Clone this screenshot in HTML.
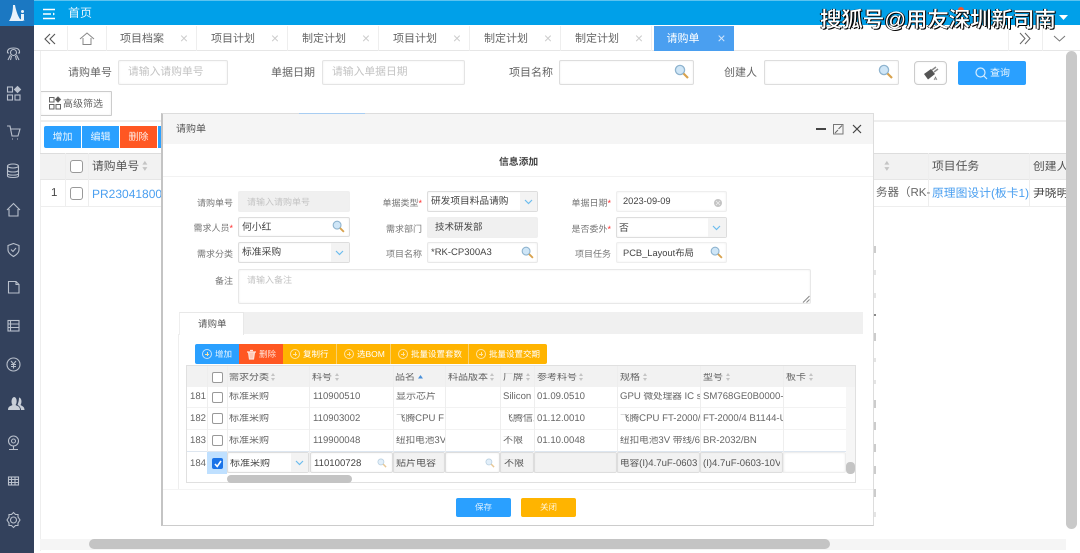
<!DOCTYPE html>
<html><head><meta charset="utf-8"><style>
*{box-sizing:border-box}
html,body{margin:0;padding:0;width:1080px;height:553px;overflow:hidden;background:#fff}
body{font-family:"Liberation Sans","Noto Sans CJK SC",sans-serif;color:#555;position:relative;text-rendering:geometricPrecision}
#w{position:absolute;left:0;top:0;width:1080px;height:553px;filter:blur(.3px)}
.a{position:absolute;white-space:nowrap;overflow:hidden}
.t{position:absolute;white-space:nowrap;line-height:1}
svg{position:absolute;overflow:visible}
.ipt{position:absolute;border:1px solid #e4e4e4;border-radius:2px;background:#fff;box-shadow:inset 0 0 2px #eee}
.tab{position:absolute;top:26px;height:25px;border-right:1px solid #eee;font-size:11px;color:#666;line-height:27px;padding-left:14px;width:91px}
.tab i{position:absolute;right:8px;top:0;font-style:normal;color:#ccc;font-size:14px;line-height:25px}
.btn{position:absolute;top:344px;height:20px;background:#ffb400;border-right:1px solid #f8d070;color:#fff;font-size:8.5px;line-height:20px}
.btn b{position:absolute;left:7px;top:5px;width:10px;height:10px;border:1px solid #ffe2a0;border-radius:50%}
.btn b:before{content:"";position:absolute;left:2px;top:3.5px;width:4px;height:1px;background:#ffe2a0}
.btn b:after{content:"";position:absolute;left:3.5px;top:2px;width:1px;height:4px;background:#ffe2a0}
.btn span{position:absolute;left:20px;top:0}
.c{position:absolute;font-size:10px;color:#666;line-height:1;white-space:nowrap;overflow:hidden;margin-top:1px}
.n{font-size:9.6px}
.cb{position:absolute;width:11px;height:11px;border:1px solid #999;border-radius:2px;background:#fff}
.l{position:absolute;background:#eee}
.s{position:absolute;width:5px;height:9px}
.s:before{content:"";position:absolute;left:0;top:0;border:2.5px solid transparent;border-bottom:3px solid #c4c4c4;border-top:0}
.s:after{content:"";position:absolute;left:0;top:5px;border:2.5px solid transparent;border-top:3px solid #c4c4c4;border-bottom:0}
.lab{position:absolute;font-size:9px;color:#777;line-height:1;white-space:nowrap;text-align:right;width:60px;margin-top:2px}
.lab em{color:#f33;font-style:normal}
.v{position:absolute;font-size:9.8px;color:#444;line-height:1;white-space:nowrap;margin-top:1px}
.ph{position:absolute;font-size:9.5px;color:#c4c4c4;line-height:1;white-space:nowrap}
.m{position:absolute;left:874px;width:2px;background:#ccc}
</style></head><body>
<svg width="0" height="0" style="position:absolute"><defs>
<g id="mag"><circle cx="6" cy="6" r="4.6" fill="#cfe6f7" stroke="#8fb4cf" stroke-width="1.3"/><path d="M9.5 9.5L14 14" stroke="#d8a24e" stroke-width="2.2"/></g>
<g id="chev"><path d="M0 0L3.5 3.5L7 0" fill="none" stroke="#6cbcee" stroke-width="1.2"/></g>
</defs></svg>
<div id="w">
<!-- top -->
<div class="a" style="left:0;top:0;width:1080px;height:25px;background:#00a0e9;border-top:1px solid #5cc3f0"></div>
<div class="a" style="left:0;top:0;width:34px;height:26px;background:#1b78c2"></div>
<svg style="left:0;top:0" width="34" height="26"><path d="M9 21C12 17 13 10 13 5L15 5C16 11 18 16 20 19L25 21Z" fill="#e8f2fa"/><rect x="21" y="14" width="3" height="6" fill="#e8f2fa"/><circle cx="22.500" cy="11.500" r="1.500" fill="#e8f2fa"/></svg>
<svg style="left:42px;top:8px" width="14" height="12"><path d="M1 1.500H13M1 6H9M1 10.500H13" stroke="#fff" stroke-width="1.600"/><path d="M11 4.500L13 6L11 7.500Z" fill="#fff"/></svg>
<div class="t" style="left:68px;top:7px;font-size:12px;color:#eaf6fd">首页</div>
<div class="a" style="left:958px;top:7px;width:6px;height:6px;border-radius:50%;background:#f0562a"></div>
<svg style="left:1059px;top:15px" width="10" height="6"><path d="M0 0H9L4.500 5Z" fill="#fff"/></svg>
<!-- sidebar -->
<div class="a" style="left:0;top:26px;width:34px;height:527px;background:#33415c"></div>
<svg style="left:0;top:26px" width="34" height="527" fill="none" stroke="#b9c0cc" stroke-width="1.100">
<path d="M7.500 27C7 23 10 22 13.500 22C17 22 20 23 19.500 27L18 27M9 27L7.500 27M10.500 26.500a3 3 0 1 1 6 0a3 3 0 1 1 -6 0M10.500 29L8 34M16.500 29L19 34M11.500 30L10.500 34M15.500 30L16.500 34"/>
<rect x="7.500" y="61" width="5" height="5"/><rect x="7.500" y="69" width="5" height="5"/><rect x="15" y="69" width="5" height="5"/><path d="M17.500 60.500L20.500 63.500L17.500 66.500L14.500 63.500Z" fill="#b9c0cc"/>
<path d="M7 100H10L12 110H18L20 103H11M12 113h1M17 113h1"/>
<ellipse cx="13" cy="140" rx="5.500" ry="2"/><path d="M7.500 140V150C7.500 152 18.500 152 18.500 150V140M7.500 144.500C9 146.500 17 146.500 18.500 144.500M7.500 148C9 149.500 17 149.500 18.500 148"/>
<path d="M7 184L13.500 177.500L20 184M9 183V190H18V183"/>
<path d="M13.500 217.500L19 219.500V224C19 227 16 229 13.500 230.500C11 229 8 227 8 224V219.500ZM11 223.500L13 225.500L16 222"/>
<path d="M8.500 255.500H16L19 258.500V267H8.500ZM16 255.500V258.500H19"/>
<rect x="8" y="294.500" width="11" height="10.500"/><path d="M8 298H19M8 301.500H19M10.500 294.500V305"/>
<circle cx="13.500" cy="338.500" r="6.500"/><path d="M11 335L13.500 338L16 335M13.500 338V342.500M11 338.500H16M11 340.500H16"/>
<path d="M8 384C8 380 11 380 12.500 379C11 377 11 372 14 371C17 371 17.500 377 15.500 379C17 380 20 380 20 384Z" fill="#c9cfd8" stroke="none"/>
<path d="M19 371.500C22 372 22 377 20.500 379C22 380 24.500 380.500 24.500 384H21C21 381 18 379 17.500 379C18.500 376 19 374 19 371.500Z" fill="#c9cfd8" stroke="none"/>
<circle cx="13.500" cy="415" r="5"/><circle cx="13.500" cy="415" r="2"/><path d="M13.500 420V423M9 423.500H18"/>
<rect x="8.500" y="451" width="10" height="8"/><path d="M8.500 453.500H18.500M8.500 456.500H18.500M11.500 451V459M15 451V459"/>
<circle cx="13.500" cy="494" r="3"/><path d="M13.500 486.500L15.500 488.500H18V491L20 494L18 497V499.500H15.500L13.500 501.500L11.500 499.500H9V497L7 494L9 491V488.500H11.500Z"/>
</svg>
<!-- tabs -->
<div class="a" style="left:34px;top:25px;width:1046px;height:26px;background:#fff;border-bottom:1px solid #e6e6e6"></div>
<div class="l" style="left:67px;top:26px;width:1px;height:25px"></div>
<div class="l" style="left:106px;top:26px;width:1px;height:25px"></div>
<svg style="left:44px;top:33px" width="13" height="12" fill="none" stroke="#555" stroke-width="1.100"><path d="M6 1L1 6L6 11M11 1L6 6L11 11"/></svg>
<svg style="left:80px;top:32px" width="14" height="13" fill="none" stroke="#888" stroke-width="1"><path d="M0 7L7 1L14 7M3 6V12.500H11V6"/></svg>
<div class="tab" style="left:106px">项目档案<i>×</i></div>
<div class="tab" style="left:197px">项目计划<i>×</i></div>
<div class="tab" style="left:288px">制定计划<i>×</i></div>
<div class="tab" style="left:379px">项目计划<i>×</i></div>
<div class="tab" style="left:470px">制定计划<i>×</i></div>
<div class="tab" style="left:561px">制定计划<i>×</i></div>
<div class="tab" style="left:653.500px;width:80px;background:#4a9ff0;color:#fff;padding-left:13px;border:0">请购单<i style="color:#cfe4fb">×</i></div>
<div class="l" style="left:1008px;top:26px;width:1px;height:25px"></div>
<div class="l" style="left:1042px;top:26px;width:1px;height:25px"></div>
<svg style="left:1019px;top:33px" width="13" height="11" fill="none" stroke="#666" stroke-width="1"><path d="M1 0L6 5.500L1 11M6 0L11 5.500L6 11"/></svg>
<svg style="left:1053px;top:35px" width="13" height="8" fill="none" stroke="#777" stroke-width="1"><path d="M1 1L6.500 6L12 1"/></svg>
<!-- filter -->
<div class="t" style="left:68px;top:68px;font-size:11px;color:#666">请购单号</div>
<div class="ipt" style="left:118px;top:60px;width:110px;height:25px"></div>
<div class="ph" style="left:128px;top:67px;font-size:10.800px">请输入请购单号</div>
<div class="t" style="left:271px;top:68px;font-size:11px;color:#666">单据日期</div>
<div class="ipt" style="left:322px;top:60px;width:143px;height:25px"></div>
<div class="ph" style="left:332px;top:67px;font-size:10.800px">请输入单据日期</div>
<div class="t" style="left:509px;top:68px;font-size:11px;color:#666">项目名称</div>
<div class="ipt" style="left:559px;top:60px;width:135px;height:25px;border-color:#ddd"></div>
<svg style="left:674px;top:64px" width="16" height="16"><use href="#mag"/></svg>
<div class="t" style="left:724px;top:68px;font-size:11px;color:#666">创建人</div>
<div class="ipt" style="left:764px;top:60px;width:135px;height:25px;border-color:#ddd"></div>
<svg style="left:878px;top:64px" width="16" height="16"><use href="#mag"/></svg>
<div class="ipt" style="left:914px;top:61px;width:33px;height:24px;border-color:#ccc;border-radius:4px"></div>
<svg style="left:923px;top:66px" width="16" height="16"><path d="M1 8L8 3L12 8L5 13.500Z" fill="#555"/><path d="M9 4L13 1M11 6L15 3" stroke="#888" stroke-width="1.500"/><path d="M11 14l1.500-3l1.500 3M11.500 13h2" stroke="#777" stroke-width=".7" fill="none"/></svg>
<div class="a" style="left:958px;top:61px;width:68px;height:24px;background:#2aa0ff;border-radius:2px"></div>
<svg style="left:975px;top:67px" width="13" height="13" fill="none" stroke="#d7edff" stroke-width="1.200"><circle cx="5.500" cy="5.500" r="4.500"/><path d="M9 9L12 12"/></svg>
<div class="t" style="left:990px;top:69px;font-size:10px;color:#e8f5ff">查询</div>
<div class="ipt" style="left:40px;top:91px;width:72px;height:25px;border-color:#ccc;border-radius:1px"></div>
<svg style="left:49px;top:97px" width="14" height="13" fill="none" stroke="#666"><rect x=".5" y=".5" width="4.500" height="4.500"/><rect x=".5" y="7.500" width="4.500" height="4.500"/><rect x="7" y="7.500" width="4.500" height="4.500"/><path d="M9 0L11.500 2.500L9 5L6.500 2.500Z" fill="#555"/></svg>
<div class="t" style="left:63px;top:100px;font-size:10px;color:#666">高级筛选</div>
<div class="a" style="left:40px;top:120px;width:1026px;height:2px;background:#eee"></div>
<div class="a" style="left:40px;top:51px;width:1px;height:500px;background:#eee"></div>
<!-- toolbar -->
<div class="a" style="left:44px;top:126px;width:37px;height:22px;background:#2aa0ff;border-radius:2px 0 0 2px;color:#e8f5ff;font-size:10px;line-height:23px;text-align:center">增加</div>
<div class="a" style="left:82px;top:126px;width:37px;height:22px;background:#2aa0ff;color:#e8f5ff;font-size:10px;line-height:23px;text-align:center">编辑</div>
<div class="a" style="left:120px;top:126px;width:37px;height:22px;background:#ff5722;color:#ffe8df;font-size:10px;line-height:23px;text-align:center">删除</div>
<div class="a" style="left:158px;top:126px;width:4px;height:22px;background:#2aa0ff"></div>
<!-- main table -->
<div class="a" style="left:40px;top:153px;width:1026px;height:27px;background:#f2f2f2;border-top:1px solid #ddd;border-bottom:1px solid #e6e6e6"></div>
<div class="l" style="left:65px;top:153px;width:1px;height:53px"></div>
<div class="l" style="left:88px;top:153px;width:1px;height:53px"></div>
<div class="l" style="left:928px;top:153px;width:1px;height:53px"></div>
<div class="l" style="left:1029px;top:153px;width:1px;height:53px"></div>
<div class="l" style="left:40px;top:206px;width:1026px;height:1px"></div>
<div class="cb" style="left:70px;top:160px;width:13px;height:13px;border-radius:3px"></div>
<div class="cb" style="left:70px;top:187px;width:13px;height:13px;border-radius:3px"></div>
<div class="t" style="left:92px;top:161px;font-size:11.800px;color:#555">请购单号</div>
<div class="s" style="left:143px;top:162px;transform:scale(1.250)"></div>
<div class="t" style="left:51px;top:188px;font-size:11.500px;color:#444">1</div>
<div class="t" style="left:92px;top:188px;font-size:12px;color:#4a9ff0">PR230418000</div>
<div class="s" style="left:885px;top:162px;transform:scale(1.250)"></div>
<div class="t" style="left:876px;top:188px;font-size:11.500px;color:#666">务器（RK-</div>
<div class="t" style="left:932px;top:161px;font-size:11.800px;color:#555">项目任务</div>
<div class="t" style="left:932px;top:188px;font-size:11.800px;color:#4a9ff0">原理图设计(板卡1)</div>
<div class="t" style="left:1033px;top:161px;font-size:11.800px;color:#555;width:33px;overflow:hidden">创建人</div>
<div class="t" style="left:1033px;top:188px;font-size:11.800px;color:#444;width:33px;overflow:hidden">尹晓明</div>
<!-- main scrollbars -->
<div class="a" style="left:1066px;top:51px;width:14px;height:488px;background:#fff"></div>
<div class="a" style="left:1066px;top:51px;width:11px;height:478px;background:#c9c9c9;border-radius:6px"></div>
<div class="a" style="left:40px;top:539px;width:1026px;height:11px;background:#f5f5f5"></div>
<div class="a" style="left:89px;top:539px;width:741px;height:10px;background:#c4c4c4;border-radius:5px"></div>
<!-- dialog -->
<div class="m" style="top:246px;height:7px"></div><div class="m" style="top:270px;height:5px;background:#e4e4e4"></div><div class="m" style="top:293px;height:5px;background:#e4e4e4"></div><div class="m" style="top:314px;height:2px;background:#888"></div><div class="m" style="top:333px;height:8px"></div><div class="m" style="top:358px;height:4px;background:#e4e4e4"></div><div class="m" style="top:380px;height:4px;background:#e4e4e4"></div><div class="m" style="top:400px;height:8px"></div><div class="m" style="top:422px;height:8px"></div><div class="m" style="top:444px;height:8px"></div><div class="m" style="top:466px;height:8px"></div><div class="m" style="top:489px;height:8px"></div><div class="m" style="top:512px;height:5px;background:#e4e4e4"></div>
<div class="a" style="left:161px;top:113px;width:713px;height:413px;background:#fff;border:1px solid #ddd;border-left:2px solid #c4c4c4;border-right:1px solid #ddd;border-bottom:1px solid #ccc"></div>
<div class="a" style="left:299px;top:113px;width:66px;height:1px;background:#a8cdf2"></div>
<div class="a" style="left:163px;top:114px;width:710px;height:30px;background:#f5f5f5"></div>
<div class="t" style="left:176px;top:125px;font-size:10px;color:#555">请购单</div>
<div class="a" style="left:816px;top:128px;width:10px;height:2px;background:#444"></div>
<svg style="left:833px;top:124px" width="11" height="11" fill="none" stroke="#777"><rect x=".5" y=".5" width="9.500" height="9.500"/><path d="M5.500 5L9 1.500M2 9L5 6" stroke="#666"/></svg>
<svg style="left:852px;top:124px" width="10" height="10" fill="none" stroke="#444" stroke-width="1.200"><path d="M1 1L9 9M9 1L1 9"/></svg>
<div class="t" style="left:499px;top:158px;font-size:9.800px;font-weight:bold;color:#444">信息添加</div>
<div class="l" style="left:163px;top:176px;width:710px;height:1px;background:#f2f2f2"></div>
<!-- form -->
<div class="lab" style="left:173px;top:197px">请购单号</div>
<div class="ipt" style="left:238px;top:191px;width:112px;height:21px;background:#f0f0f0;border-color:#efefef"></div>
<div class="ph" style="left:247px;top:198px;font-size:9px">请输入请购单号</div>
<div class="lab" style="left:362px;top:197px">单据类型<em>*</em></div>
<div class="ipt" style="left:427px;top:191px;width:111px;height:21px;border-color:#ddd"></div>
<div class="a" style="left:520px;top:192px;width:17px;height:19px;background:#f3f3f3"></div>
<svg style="left:525px;top:200px" width="8" height="5"><use href="#chev"/></svg>
<div class="v" style="left:431px;top:196px;font-size:9.700px">研发项目料品请购</div>
<div class="lab" style="left:551px;top:197px">单据日期<em>*</em></div>
<div class="ipt" style="left:616px;top:191px;width:111px;height:21px;border-color:#eee"></div>
<div class="v" style="left:623px;top:196px;font-size:9.300px">2023-09-09</div>
<div class="a" style="left:714px;top:199px;width:8px;height:8px;background:#c4c4c4;border-radius:50%"></div>
<svg style="left:716px;top:201px" width="4" height="4" stroke="#eee" stroke-width=".8"><path d="M0 0L4 4M4 0L0 4"/></svg>
<div class="lab" style="left:173px;top:222px">需求人员<em>*</em></div>
<div class="ipt" style="left:238px;top:217px;width:112px;height:20px;border-color:#ddd"></div>
<div class="v" style="left:242px;top:222px">何小红</div>
<svg style="left:332px;top:220px" width="16" height="16"><g transform="scale(.85)"><use href="#mag"/></g></svg>
<div class="lab" style="left:362px;top:223px">需求部门</div>
<div class="ipt" style="left:427px;top:217px;width:111px;height:21px;background:#f0f0f0;border-color:#efefef"></div>
<div class="v" style="left:435px;top:222px;font-size:9.500px">技术研发部</div>
<div class="lab" style="left:551px;top:223px">是否委外<em>*</em></div>
<div class="ipt" style="left:616px;top:217px;width:111px;height:21px;border-color:#ddd"></div>
<div class="a" style="left:708px;top:218px;width:18px;height:19px;background:#f3f3f3"></div>
<svg style="left:713px;top:226px" width="8" height="5"><use href="#chev"/></svg>
<div class="v" style="left:619px;top:223px">否</div>
<div class="lab" style="left:173px;top:248px">需求分类</div>
<div class="ipt" style="left:238px;top:242px;width:112px;height:21px;border-color:#ddd"></div>
<div class="a" style="left:331px;top:243px;width:18px;height:19px;background:#f3f3f3"></div>
<svg style="left:336px;top:251px" width="8" height="5"><use href="#chev"/></svg>
<div class="v" style="left:242px;top:247px">标准采购</div>
<div class="lab" style="left:362px;top:248px">项目名称</div>
<div class="ipt" style="left:427px;top:242px;width:111px;height:21px;border-color:#e8e8e8"></div>
<div class="v" style="left:431px;top:247px;font-size:9.500px">*RK-CP300A3</div>
<svg style="left:521px;top:246px" width="16" height="16"><g transform="scale(.85)"><use href="#mag"/></g></svg>
<div class="lab" style="left:551px;top:248px">项目任务</div>
<div class="ipt" style="left:616px;top:242px;width:111px;height:21px;border-color:#eee"></div>
<div class="v" style="left:623px;top:248px;font-size:9.300px">PCB_Layout布局</div>
<svg style="left:710px;top:246px" width="16" height="16"><g transform="scale(.85)"><use href="#mag"/></g></svg>
<div class="lab" style="left:173px;top:275px">备注</div>
<div class="ipt" style="left:238px;top:269px;width:573px;height:35px;border-color:#e8e8e8"></div>
<div class="ph" style="left:247px;top:276px;font-size:9px">请输入备注</div>
<svg style="left:803px;top:296px" width="7" height="7" stroke="#888" fill="none"><path d="M0 6.500L6.500 0M3.500 6.500L6.500 3.500"/></svg>
<!-- inner tab -->
<div class="a" style="left:179px;top:312px;width:684px;height:22px;background:#f0f0f0"></div>
<div class="a" style="left:179px;top:312px;width:65px;height:23px;background:#fff;border-top:1px solid #e8e8e8;border-left:1px solid #eee;border-right:1px solid #e8e8e8;font-size:9.500px;color:#555;line-height:23px;padding-left:18px">请购单</div>
<div class="a" style="left:178px;top:334px;width:1px;height:156px;background:#eee"></div>
<!-- buttons -->
<div class="btn" style="left:195px;width:44px;background:#2aa0ff;border-radius:2px 0 0 2px;border-color:#2aa0ff"><b style="border-color:#bfe1ff"></b><span style="color:#e8f5ff">增加</span></div>
<div class="btn" style="left:239px;width:44px;background:#ff5722;border-color:#ff5722"><span style="color:#ffe3d9">删除</span></div>
<svg style="left:247px;top:350px" width="9" height="9"><path d="M0 2H9M1.500 2L2.500 9H6.500L7.500 2M3 0.500H6" stroke="#ffe3d9" stroke-width="1.200" fill="#ffc8b5"/></svg>
<div class="btn" style="left:283px;width:54px"><b></b><span>复制行</span></div>
<div class="btn" style="left:337px;width:54px"><b></b><span>选BOM</span></div>
<div class="btn" style="left:391px;width:78px"><b></b><span>批量设置套数</span></div>
<div class="btn" style="left:469px;width:78px;border:0;border-radius:0 2px 2px 0"><b></b><span>批量设置交期</span></div>
<!-- grid -->
<div class="a" style="left:186px;top:365px;width:670px;height:118px;background:#fff;border:1px solid #e0e0e0"></div>
<div class="a" style="left:187px;top:366px;width:668px;height:21px;background:#f2f2f2"></div>
<div class="l" style="left:187px;top:407px;width:660px;height:1px;background:#f2f2f2"></div>
<div class="l" style="left:187px;top:429px;width:660px;height:1px;background:#f2f2f2"></div>
<div class="l" style="left:187px;top:451px;width:660px;height:1px;background:#dde6f0"></div>
<div class="l" style="left:207px;top:366px;width:1px;height:107px"></div>
<div class="l" style="left:227px;top:366px;width:1px;height:107px"></div>
<div class="l" style="left:309px;top:366px;width:1px;height:107px"></div>
<div class="l" style="left:393px;top:366px;width:1px;height:107px"></div>
<div class="l" style="left:445px;top:366px;width:1px;height:107px"></div>
<div class="l" style="left:500px;top:366px;width:1px;height:107px"></div>
<div class="l" style="left:534px;top:366px;width:1px;height:107px"></div>
<div class="l" style="left:617px;top:366px;width:1px;height:107px"></div>
<div class="l" style="left:700px;top:366px;width:1px;height:107px"></div>
<div class="l" style="left:783px;top:366px;width:1px;height:107px"></div>
<div class="cb" style="left:212px;top:372px"></div>
<div class="c" style="left:229px;top:372px">需求分类</div><div class="s" style="left:271px;top:373px"></div>
<div class="c" style="left:312px;top:372px">料号</div><div class="s" style="left:335px;top:373px"></div>
<div class="c" style="left:395px;top:372px">品名</div>
<svg style="left:418px;top:375px" width="6" height="4"><path d="M0 3.500L2.500 0L5 3.500Z" fill="#4a90d9"/></svg>
<div class="c" style="left:448px;top:372px">料品版本</div><div class="s" style="left:490px;top:373px"></div>
<div class="c" style="left:503px;top:372px">厂牌</div><div class="s" style="left:526px;top:373px"></div>
<div class="c" style="left:537px;top:372px">参考料号</div><div class="s" style="left:579px;top:373px"></div>
<div class="c" style="left:620px;top:372px">规格</div><div class="s" style="left:643px;top:373px"></div>
<div class="c" style="left:703px;top:372px">型号</div><div class="s" style="left:726px;top:373px"></div>
<div class="c" style="left:786px;top:372px">板卡</div><div class="s" style="left:809px;top:373px"></div>
<!-- row 181 -->
<div class="c n" style="left:190px;top:391px">181</div><div class="cb" style="left:212px;top:392px"></div>
<div class="c" style="left:229px;top:391px">标准采购</div><div class="c n" style="left:313px;top:391px">110900510</div><div class="c" style="left:396px;top:391px">显示芯片</div>
<div class="c n" style="left:503px;top:391px;width:31px">Silicon</div><div class="c n" style="left:537px;top:391px">01.09.0510</div>
<div class="c n" style="left:620px;top:391px;width:80px">GPU 微处理器 IC s</div><div class="c n" style="left:703px;top:391px;width:80px">SM768GE0B0000-</div>
<!-- row 182 -->
<div class="c n" style="left:190px;top:413px">182</div><div class="cb" style="left:212px;top:413px"></div>
<div class="c" style="left:229px;top:413px">标准采购</div><div class="c n" style="left:313px;top:413px">110903002</div><div class="c n" style="left:396px;top:413px;width:49px">飞腾CPU F</div>
<div class="c" style="left:503px;top:413px;width:31px">飞腾信息</div><div class="c n" style="left:537px;top:413px">01.12.0010</div>
<div class="c n" style="left:620px;top:413px;width:80px">飞腾CPU FT-2000/</div><div class="c n" style="left:703px;top:413px;width:80px">FT-2000/4 B1144-U</div>
<!-- row 183 -->
<div class="c n" style="left:190px;top:435px">183</div><div class="cb" style="left:212px;top:435px"></div>
<div class="c" style="left:229px;top:435px">标准采购</div><div class="c n" style="left:313px;top:435px">119900048</div><div class="c n" style="left:396px;top:435px;width:49px">纽扣电池3V</div>
<div class="c" style="left:503px;top:435px">不限</div><div class="c n" style="left:537px;top:435px">01.10.0048</div>
<div class="c n" style="left:620px;top:435px;width:80px">纽扣电池3V 带线/6</div><div class="c n" style="left:703px;top:435px;width:80px">BR-2032/BN</div>
<!-- row 184 -->
<div class="a" style="left:207px;top:452px;width:20px;height:22px;background:#bfe0ff"></div>
<div class="a" style="left:212px;top:458px;width:11px;height:11px;background:#1a73e8;border-radius:2px"></div>
<svg style="left:213.500px;top:459.500px" width="8" height="8" fill="none" stroke="#fff" stroke-width="1.600"><path d="M1 4L3.200 6.500L7 1"/></svg>
<div class="c n" style="left:190px;top:458px">184</div>
<div class="ipt" style="left:227px;top:452px;width:82px;height:21px;border-color:#ddd"></div>
<div class="a" style="left:291px;top:453px;width:17px;height:19px;background:#f3f3f3"></div>
<svg style="left:296px;top:461px" width="8" height="5"><use href="#chev"/></svg>
<div class="c" style="left:230px;top:458px;color:#444">标准采购</div>
<div class="ipt" style="left:310px;top:452px;width:83px;height:21px;border-color:#ddd"></div>
<div class="c n" style="left:314px;top:458px;color:#444">110100728</div>
<svg style="left:377px;top:458px" width="11" height="11"><g transform="scale(.65)" opacity=".6"><use href="#mag"/></g></svg>
<div class="ipt" style="left:393px;top:452px;width:52px;height:21px;background:#f2f2f2;border-color:#ddd"></div>
<div class="c" style="left:396px;top:458px;color:#555">贴片电容</div>
<div class="ipt" style="left:445px;top:452px;width:55px;height:21px;border-color:#ddd"></div>
<svg style="left:485px;top:458px" width="11" height="11"><g transform="scale(.65)" opacity=".6"><use href="#mag"/></g></svg>
<div class="ipt" style="left:500px;top:452px;width:34px;height:21px;background:#f2f2f2;border-color:#ddd"></div>
<div class="c" style="left:504px;top:458px;color:#555">不限</div>
<div class="ipt" style="left:534px;top:452px;width:83px;height:21px;background:#f2f2f2;border-color:#ddd"></div>
<div class="ipt" style="left:617px;top:452px;width:83px;height:21px;background:#f2f2f2;border-color:#ddd"></div>
<div class="c n" style="left:620px;top:458px;width:77px;color:#555">电容(I)4.7uF-0603</div>
<div class="ipt" style="left:700px;top:452px;width:83px;height:21px;background:#f2f2f2;border-color:#ddd"></div>
<div class="c n" style="left:703px;top:458px;width:77px;color:#555">(I)4.7uF-0603-10V</div>
<div class="ipt" style="left:783px;top:452px;width:63px;height:21px;border-color:#eee"></div>
<div class="a" style="left:846px;top:387px;width:9px;height:86px;background:#f6f6f6"></div>
<div class="a" style="left:846px;top:462px;width:9px;height:12px;background:#c4c4c4;border-radius:4px"></div>
<div class="a" style="left:187px;top:474px;width:668px;height:8px;background:#fff"></div>
<div class="a" style="left:227px;top:475px;width:125px;height:8px;background:#c4c4c4;border-radius:4px"></div>
<!-- footer -->
<div class="l" style="left:163px;top:489px;width:710px;height:1px;background:#f4f4f4"></div>
<div class="a" style="left:456px;top:498px;width:55px;height:19px;background:#2aa0ff;border-radius:2px;color:#d9eeff;font-size:8.500px;line-height:19px;text-align:center">保存</div>
<div class="a" style="left:521px;top:498px;width:55px;height:19px;background:#ffb400;border-radius:2px;color:#fff6dd;font-size:8.500px;line-height:19px;text-align:center">关闭</div>
<!-- watermark -->
<div class="t" style="left:820px;top:10px;font-size:21.500px;font-weight:500;color:#fff;text-shadow:1px 1px 0 #000,-1px 0 0 #111,1px 0 0 #222;letter-spacing:-.1px">搜狐号@用友深圳新司南</div>
</div>
</body></html>
